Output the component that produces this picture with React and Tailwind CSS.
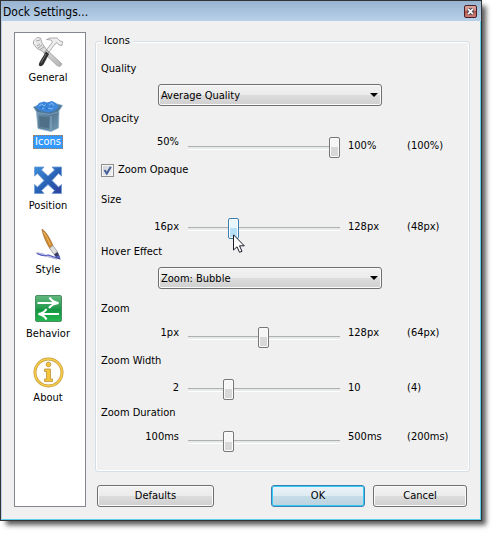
import { useState } from "react";

function ToolsIcon() {
  return (
    <svg viewBox="0 0 32 32" className="h-8 w-8">
      <defs>
        <linearGradient id="steel" x1="0" y1="0" x2="1" y2="1">
          <stop offset="0" stopColor="#f4f4f4" />
          <stop offset="1" stopColor="#b4b4b4" />
        </linearGradient>
      </defs>
      <path d="M1.500 5 L5 1.500 L8.500 2 L10 7 L14 13 L30 28 L28 30.500 L25 29.500 L10 15 L5 12.500 L1.500 8 Z" fill="url(#steel)" stroke="#9b9b9b" strokeWidth="0.800" />
      <path d="M4 5 L8 4 M5 10 L8 8 M6 12 L10 9 M8 13.500 L12 11" stroke="#8a8a8a" strokeWidth="0.700" />
      <path d="M19 4 L14.500 3.500 L18 2 L25 2 L28 5 L30.500 5.500 L30 9.500 L27 9 L25 6.500 L23 8 L17 16 L14.500 14 L20.500 6 Z" fill="#eeeeee" stroke="#9b9b9b" strokeWidth="0.800" />
      <path d="M17 16 L14.500 14 L12 17.500 L14.500 19.500 Z" fill="#cfcfcf" stroke="#777" strokeWidth="0.600" />
      <path d="M14 15.500 L17 18 L11.500 28.500 Q9 31.500 7 29.500 Q6.500 28 8 25.500 Z" fill="#303030" />
      <path d="M14 18 L9 27" stroke="#777" strokeWidth="0.900" />
    </svg>
  );
}

function BinIcon() {
  return (
    <svg viewBox="0 0 32 32" className="h-8 w-8">
      <defs>
        <linearGradient id="bin" x1="0" y1="0" x2="1" y2="1">
          <stop offset="0" stopColor="#6f94b0" />
          <stop offset="0.450" stopColor="#587a94" />
          <stop offset="1" stopColor="#7298b2" />
        </linearGradient>
      </defs>
      <path d="M4.500 12 L27 11 L26.500 28 L19 31.500 L6 28.500 Z" fill="url(#bin)" stroke="#8db0c8" strokeWidth="0.800" />
      <path d="M7 16 L17 17.500 L17 28.500 L8 26.500 Z" fill="#4f6f87" />
      <path d="M19 16 L19 30.500" stroke="#8db4cf" strokeWidth="0.900" />
      <path d="M1.500 7 L7 5 L25 4 L30.500 5.500 L26 12 L18 14.500 L5 12.500 Z" fill="#4f7694" stroke="#7fa6c4" strokeWidth="0.800" />
      <path d="M3.500 7.500 L7 3 L12 1.500 L15 2.500 L20 1 L24 3 L27 7 L22 11 L16 12.500 L8 10.500 Z" fill="#3c87dc" />
      <path d="M7 6 L10 4 L12 6 L14 4 M17 5 L20 3 L22 6 M10 9 L12 8 M16 8 L19 9 L21 8" stroke="#7fb9f4" strokeWidth="1" fill="none" />
      <path d="M8 8 L10 7 M14 7 L16 10 M19 6 L20 7 M14 4 L15 5.500" stroke="#2370c9" strokeWidth="1" />
    </svg>
  );
}

function PositionIcon() {
  return (
    <svg viewBox="0 0 32 32" className="h-8 w-8">
      <defs>
        <linearGradient id="arrows" x1="0" y1="0" x2="1" y2="1">
          <stop offset="0" stopColor="#3d8fd8" />
          <stop offset="0.550" stopColor="#2860b4" />
          <stop offset="1" stopColor="#303f9c" />
        </linearGradient>
      </defs>
      <path
        d="M2.500 3 H12 L9.500 6 L16 12 L22.500 6 L20 3 H29.500 V12 L26.500 9.500 L20 16.500 L26.500 23 L29.500 20.500 V29.500 H20 L22.500 26.500 L16 20.500 L9.500 26.500 L12 29.500 H2.500 V20.500 L5.500 23 L12 16.500 L5.500 9.500 L2.500 12 Z"
        fill="url(#arrows)"
        stroke="#6c9bd6"
        strokeWidth="0.800"
      />
    </svg>
  );
}

function BrushIcon() {
  return (
    <svg viewBox="0 0 32 32" className="h-8 w-8">
      <path d="M4 25 Q11 25 14 27.500 M7 26 L25 31" stroke="#b9bdd9" strokeWidth="1.500" fill="none" />
      <path d="M5 25.500 Q12 29 16 27 Q19 28 28 31" stroke="#5259c2" strokeWidth="1.200" fill="none" />
      <path d="M10 1 Q15 4 21 17.500 L17.500 20 Q11 9 10 1 Z" fill="#cf8a2e" stroke="#9d692b" strokeWidth="0.700" />
      <path d="M11.500 4 Q15 9 18.500 17" stroke="#edbd70" fill="none" />
      <path d="M17.500 20 L21 17.500 L25.500 24 L22 26.500 Z" fill="#dedede" stroke="#8c8c8c" strokeWidth="0.700" />
      <path d="M22 26.500 L25.500 24 Q27.500 27 28.500 31.500 Q24 30.500 22 26.500 Z" fill="#3d3f68" />
      <path d="M24 28.500 L28.500 31.500 L27 27.500" fill="#5662d2" />
    </svg>
  );
}

function BehaviorIcon() {
  return (
    <svg viewBox="0 0 32 32" className="h-8 w-8">
      <defs>
        <linearGradient id="green" x1="0" y1="0" x2="0" y2="1">
          <stop offset="0" stopColor="#62b880" />
          <stop offset="0.500" stopColor="#229a4b" />
          <stop offset="0.520" stopColor="#119440" />
          <stop offset="1" stopColor="#23b850" />
        </linearGradient>
      </defs>
      <rect x="3.500" y="3.500" width="26" height="26" rx="1.500" fill="url(#green)" stroke="#4c8c63" />
      <path d="M5.500 11 H25 M17.500 5.500 Q20 10 26.500 11 Q20 12 17 16" fill="none" stroke="#fff" strokeWidth="2.200" />
      <path d="M27 22 H8 M14.500 17 Q12 21 6.500 22 Q12 23 14.500 27.500" fill="none" stroke="#fff" strokeWidth="2.200" />
    </svg>
  );
}

function AboutIcon() {
  return (
    <svg viewBox="0 0 32 32" className="h-8 w-8">
      <circle cx="16.500" cy="16.500" r="13.500" fill="#fffefa" stroke="#c39a3b" strokeWidth="3" />
      <circle cx="16.500" cy="16.500" r="13.500" fill="none" stroke="#f7cd49" strokeWidth="1.600" />
      <circle cx="16.500" cy="8.500" r="2.300" fill="#f4c53c" stroke="#bd9235" strokeWidth="0.800" />
      <path d="M12.500 13 H18.500 V23 H20.500 V25.500 H12.500 V23 H14.500 V15.500 H12.500 Z" fill="#f4c53c" stroke="#bd9235" strokeWidth="0.800" />
    </svg>
  );
}

const PAGES = [
  { name: "General", Icon: ToolsIcon },
  { name: "Icons", Icon: BinIcon },
  { name: "Position", Icon: PositionIcon },
  { name: "Style", Icon: BrushIcon },
  { name: "Behavior", Icon: BehaviorIcon },
  { name: "About", Icon: AboutIcon },
];

function Sidebar() {
  const [current, setCurrent] = useState("Icons");
  return (
    <nav className="flex w-[72px] shrink-0 flex-col items-center gap-[15px] border border-[#828790] bg-white pt-[3px] pr-1">
      {PAGES.map(({ name, Icon }) => (
        <button key={name} type="button" onClick={() => setCurrent(name)} className="flex flex-col items-center gap-[3px]">
          <Icon />
          <span
            className={
              name === current
                ? "border border-dotted border-[#b07a50] bg-[#3399ff] px-px leading-[12px] text-white"
                : "border border-transparent px-px leading-[12px]"
            }
          >
            {name}
          </span>
        </button>
      ))}
    </nav>
  );
}

function Combo({ id, label, options }) {
  return (
    <div>
      <label htmlFor={id} className="block leading-4">{label}</label>
      <div className="relative mt-[7px] mr-[87px] ml-[57px]">
        <select
          id={id}
          className="block h-[22px] w-full appearance-none rounded-[3px] border border-[#707070] bg-[linear-gradient(#f2f2f2,#ebebeb_50%,#dddddd_50%,#cfcfcf)] pt-[2px] pl-[2px] shadow-[inset_0_0_0_1px_#fafafa] outline-none"
        >
          {options.map((o) => (
            <option key={o}>{o}</option>
          ))}
        </select>
        <svg viewBox="0 0 8 4" className="pointer-events-none absolute top-[9px] right-[4px] h-1 w-2">
          <path d="M0 0 H8 L4 4 Z" fill="#000" />
        </svg>
      </div>
    </div>
  );
}

const THUMB_GRAY =
  "[&::-webkit-slider-thumb]:border-[#777] [&::-webkit-slider-thumb]:bg-[linear-gradient(#f6f6f6_50%,#d8d8d8_50%)]";
const THUMB_BLUE =
  "[&::-webkit-slider-thumb]:border-[#3c7fb1] [&::-webkit-slider-thumb]:bg-[linear-gradient(#e8f6fd_50%,#b5e0f8_50%)]";

function Slider({ id, label, unit, min, max, initial, startLine, endLine, hot }) {
  const [value, setValue] = useState(initial);
  return (
    <div>
      <label htmlFor={id} className="block leading-4">{label}</label>
      <div className="mt-[10px] flex h-[22px] items-start">
        <span className={`w-[78px] shrink-0 text-right ${startLine}`}>{min}{unit}</span>
        <div className="relative ml-[9px] min-w-0 flex-1">
          <input
            id={id}
            type="range"
            min={min}
            max={max}
            value={value}
            onChange={(e) => setValue(Number(e.target.value))}
            className={`block h-[22px] w-full appearance-none bg-transparent outline-none [&::-webkit-slider-runnable-track]:h-1 [&::-webkit-slider-runnable-track]:bg-[linear-gradient(#b0b0b0_1px,#e7eaea_1px,#e7eaea_3px,#fff_3px)] [&::-webkit-slider-thumb]:-mt-[9px] [&::-webkit-slider-thumb]:h-[21px] [&::-webkit-slider-thumb]:w-[11px] [&::-webkit-slider-thumb]:appearance-none [&::-webkit-slider-thumb]:rounded-[2px] [&::-webkit-slider-thumb]:border [&::-webkit-slider-thumb]:shadow-[inset_0_0_0_1px_#fbfbfb] ${hot ? THUMB_BLUE : THUMB_GRAY}`}
          />
          {hot && (
            <svg viewBox="0 0 12 19" className="pointer-events-none absolute top-4 left-[45px] h-[19px] w-3">
              <path d="M0.500 0.800 V16 L4 12.800 L6.500 18.300 L9 17.300 L6.500 11.800 H11.300 Z" fill="#fff" stroke="#1c1c2c" />
            </svg>
          )}
        </div>
        <span className={`ml-2 w-[59px] shrink-0 ${endLine}`}>{max}{unit}</span>
        <output htmlFor={id} className={`w-[62px] shrink-0 ${endLine}`}>({value}{unit})</output>
      </div>
    </div>
  );
}

function PushButton({ children, width }) {
  return (
    <button
      type="button"
      className={`h-[22px] rounded-[3px] border border-[#707070] bg-[linear-gradient(#f2f2f2,#ebebeb_50%,#dddddd_50%,#cfcfcf)] shadow-[inset_0_0_0_1px_#fafafa] ${width}`}
    >
      {children}
    </button>
  );
}

export default function App() {
  return (
    <div className="bg-white pr-[15px] pb-[15px] font-['DejaVu_Sans_Condensed','DejaVu_Sans',sans-serif] text-[11px] leading-[14px] text-black">
      <main className="border border-[#333] bg-[#f0f0f0] shadow-[5px_5px_5px_-1px_rgba(0,0,0,0.65)]">
        <header className="flex h-5 items-center justify-between bg-linear-to-b from-[#98b3d0] to-[#b9d1ea] pr-1 pl-[2px]">
          <h1 className="pt-px text-[12px]">Dock Settings...</h1>
          <button type="button" aria-label="Close" className="flex h-[13px] w-[13px] items-center justify-center rounded-[2px] border border-[#4b1f24] bg-[linear-gradient(#dca7a0,#c98078_50%,#b4554b_50%,#c98078)]">
            <svg viewBox="0 0 9 9" className="h-[9px] w-[9px]">
              <path d="M2.200 2 L6.800 7 M6.800 2 L2.200 7" stroke="#4c4c5c" strokeWidth="3.600" />
              <path d="M2.200 2 L6.800 7 M6.800 2 L2.200 7" stroke="#fff" strokeWidth="1.800" />
            </svg>
          </button>
        </header>
        <div className="flex gap-[9px] border-x border-b border-[#5fcdec] border-l-[#b9d1ea] pt-[11px] pr-[10px] pb-[12px] pl-[12px]">
          <Sidebar />
          <form className="flex min-w-0 flex-1 flex-col pt-[2px]" onSubmit={(e) => e.preventDefault()}>
            <fieldset className="min-w-0 rounded-[3px] border border-[#d5dfe5] pr-0 pb-[18px] pl-[5px] shadow-[inset_0_0_0_1px_#fff]">
              <legend className="bg-[#f0f0f0] px-[3px]">Icons</legend>
              <div className="pt-[13px]">
                <Combo id="quality" label="Quality" options={["Average Quality", "Low Quality", "High Quality"]} />
                <div className="mt-[5px]">
                  <Slider id="opacity" label="Opacity" unit="%" min={50} max={100} initial={100} startLine="leading-[10px]" endLine="leading-[18px]" />
                </div>
                <label className="mt-[3px] flex h-4 items-center gap-1 leading-4">
                  <span className="relative h-[13px] w-[13px]">
                    <input type="checkbox" defaultChecked className="peer block h-[13px] w-[13px] appearance-none border border-[#8e8f8f] bg-linear-to-br from-[#cbd0d8] to-[#f6f6f6] shadow-[inset_0_0_0_1px_#f4f4f4]" />
                    <svg viewBox="0 0 13 13" className="pointer-events-none absolute inset-0 hidden h-[13px] w-[13px] peer-checked:block">
                      <path d="M3.500 6 L5.800 9.500 L9.800 2.800" fill="none" stroke="#4a5f97" strokeWidth="2" />
                    </svg>
                  </span>
                  Zoom Opaque
                </label>
                <div className="mt-[14px]">
                  <Slider id="size" label="Size" unit="px" min={16} max={128} initial={48} startLine="leading-[18px]" endLine="leading-[18px]" hot />
                </div>
                <div className="mt-1">
                  <Combo id="hover" label="Hover Effect" options={["Zoom: Bubble", "None", "Zoom: Plateau", "Zoom: Flat"]} />
                </div>
                <div className="mt-[12px] flex flex-col gap-1">
                  <Slider id="zoom" label="Zoom" unit="px" min={1} max={128} initial={64} startLine="leading-[12px]" endLine="leading-[12px]" />
                  <Slider id="zoom-width" label="Zoom Width" unit="" min={2} max={10} initial={4} startLine="leading-[18px]" endLine="leading-[18px]" />
                  <Slider id="zoom-duration" label="Zoom Duration" unit="ms" min={100} max={500} initial={200} startLine="leading-[12px]" endLine="leading-[12px]" />
                </div>
              </div>
            </fieldset>
            <div className="mt-[13px] flex gap-2 pr-[3px] pl-[2px]">
              <PushButton width="mr-auto w-[117px]">Defaults</PushButton>
              <button type="submit" className="h-[22px] w-[94px] rounded-[3px] border border-[#3c7fb1] bg-[linear-gradient(#eaf3f8,#deeaf1_50%,#c6dce7_50%,#bcd3df)] shadow-[inset_0_0_0_1px_#33cbf8]">
                OK
              </button>
              <PushButton width="w-[94px]">Cancel</PushButton>
            </div>
          </form>
        </div>
      </main>
    </div>
  );
}
